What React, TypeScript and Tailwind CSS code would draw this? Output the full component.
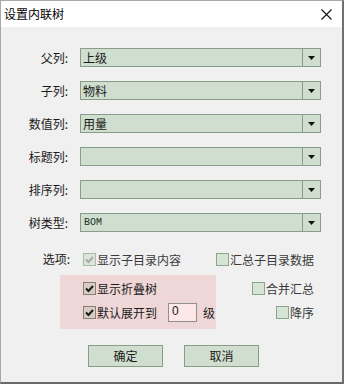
import React from "react";

const font = { fontFamily: '"Noto Sans CJK SC", "Noto Sans", sans-serif' };

function Combo({ value, mono }: { value?: string; mono?: boolean }) {
  return (
    <div className="ml-[12px] flex h-[19px] w-[241px] border border-[#8a9c8a] bg-[#cfdecf]">
      <div
        className={
          mono
            ? "flex flex-1 items-center pl-[3px] text-[10px] text-[#203020]"
            : "flex flex-1 items-center pl-[2px] text-[12px] text-[#1a1a1a]"
        }
        style={mono ? { fontFamily: '"Liberation Mono", monospace' } : undefined}
      >
        {value}
      </div>
      <div className="flex w-[18px] items-center justify-center border-l border-[#8a9c8a]">
        <svg width="7" height="4" viewBox="0 0 7 4">
          <path d="M0 0h7L3.5 4z" fill="#111" />
        </svg>
      </div>
    </div>
  );
}

function Row({ label, value, mono }: { label: string; value?: string; mono?: boolean }) {
  return (
    <div className="flex h-[19px] items-center">
      <div className="w-[67px] text-right text-[12px] leading-none text-[#1a1a1a]">{label}</div>
      <Combo value={value} mono={mono} />
    </div>
  );
}

type BoxKind = "disabled" | "checked" | "unchecked";

function Box({ kind }: { kind: BoxKind }) {
  const cls =
    kind === "checked"
      ? "border-[#8a7f78] bg-[#d5ccc5]"
      : kind === "disabled"
      ? "border-[#a6bca6] bg-[#dbe6db]"
      : "border-[#8ea48e] bg-[#d6e4d6]";
  return (
    <div className={`flex h-[13px] w-[13px] shrink-0 items-center justify-center border ${cls}`}>
      {kind !== "unchecked" && (
        <svg width="9" height="8" viewBox="0 0 9 8">
          <path
            d="M1 3.5l2.5 2.5L8 1"
            fill="none"
            stroke={kind === "checked" ? "#1c1c1c" : "#b0a4a6"}
            strokeWidth="2"
          />
        </svg>
      )}
    </div>
  );
}

function Check({ kind, label, color = "#1a1a1a" }: { kind: BoxKind; label: string; color?: string }) {
  return (
    <div className="flex h-[13px] items-center">
      <Box kind={kind} />
      <span className="ml-[1px] text-[12px] leading-none whitespace-nowrap" style={{ color }}>
        {label}
      </span>
    </div>
  );
}

export default function App() {
  return (
    <div className="h-[384px] w-[344px]" style={font}>
      <div className="flex h-[384px] w-[344px] flex-col border-t border-l border-r-2 border-b-2 border-t-[#a8a8a8] border-l-[#a8a8a8] border-r-[#707070] border-b-[#6a6a6a] bg-[#f0f0f0]">
        <div className="flex h-[26px] shrink-0 items-center justify-between bg-white pl-[3px] pr-[10px]">
          <span className="text-[12px] leading-none text-black">设置内联树</span>
          <svg width="11" height="11" viewBox="0 0 11 11">
            <path d="M0.5 0.5l10 10M10.5 0.5l-10 10" stroke="#111" strokeWidth="1.1" />
          </svg>
        </div>
        <div className="flex flex-col pt-[21px]">
          <div className="flex flex-col gap-[14px]">
            <Row label="父列:" value="上级" />
            <Row label="子列:" value="物料" />
            <Row label="数值列:" value="用量" />
            <Row label="标题列:" />
            <Row label="排序列:" />
            <Row label="树类型:" value="BOM" mono />
          </div>

          <div className="mt-[21px] flex h-[13px] items-center">
            <div className="w-[69px] text-right text-[12px] leading-none text-[#1a1a1a] -mt-[2px]">选项:</div>
            <div className="ml-[13px] w-[133px]">
              <Check kind="disabled" label="显示子目录内容" color="#3a3a3a" />
            </div>
            <Check kind="unchecked" label="汇总子目录数据" color="#3a3a3a" />
          </div>

          <div className="mt-[9px] flex">
            <div className="ml-[59px] flex h-[54px] w-[156px] flex-col bg-[#efd7d7] pl-[23px]">
              <div className="mt-[7px]">
                <Check kind="checked" label="显示折叠树" />
              </div>
              <div className="mt-[11px] flex h-[13px] items-center">
                <Check kind="checked" label="默认展开到" />
                <div className="ml-[11px] flex h-[19px] w-[29px] items-start border border-[#909090] bg-[#fde7e7] pl-[3px] pt-[1px] text-[12px] leading-none text-[#222]" style={{ fontFamily: '"Liberation Sans", sans-serif' }}>
                  0
                </div>
                <span className="ml-[6px] text-[12px] leading-none text-[#1a1a1a]">级</span>
              </div>
            </div>
            <div className="flex flex-col">
              <div className="ml-[36px] mt-[7px]">
                <Check kind="unchecked" label="合并汇总" color="#3a3a3a" />
              </div>
              <div className="ml-[60px] mt-[11px]">
                <Check kind="unchecked" label="降序" color="#3a3a3a" />
              </div>
            </div>
          </div>

          <div className="mt-[16px] flex">
            <button className="ml-[87px] flex h-[22px] w-[75px] items-center justify-center border border-[#8a9c8a] bg-[#cfdecf] text-[12px] leading-none text-[#1a1a1a]">
              确定
            </button>
            <button className="ml-[21px] flex h-[22px] w-[75px] items-center justify-center border border-[#8a9c8a] bg-[#cfdecf] text-[12px] leading-none text-[#1a1a1a]">
              取消
            </button>
          </div>
        </div>
      </div>
    </div>
  );
}
